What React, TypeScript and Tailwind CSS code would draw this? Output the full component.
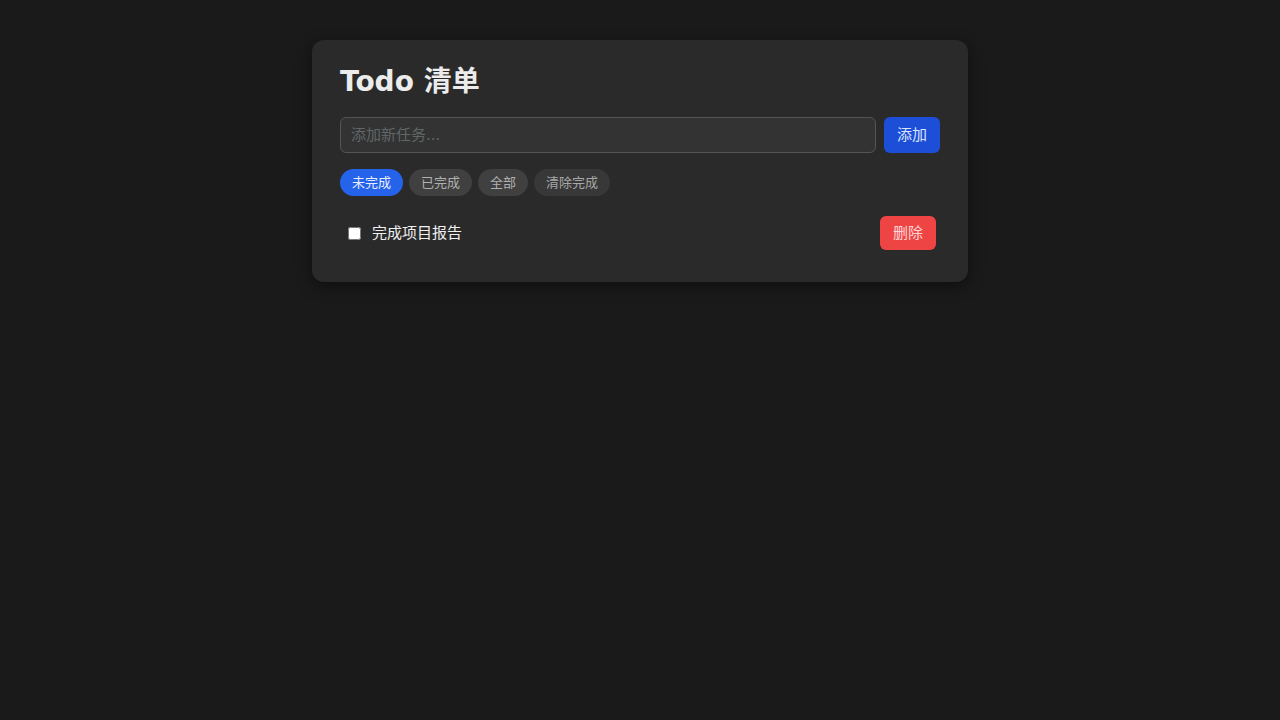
import React from "react";

const font = { fontFamily: '"DejaVu Sans", "Noto Sans CJK SC", sans-serif' };

export default function App() {
  return (
    <div className="min-h-screen w-full bg-[#1a1a1a] pt-10" style={font}>
      <div className="mx-auto w-[656px] rounded-xl bg-[#2a2a2a] px-7 pt-7 pb-7 shadow-[0_4px_16px_rgba(0,0,0,0.45)]">
        <h1 className="text-[28px] leading-[28px] font-bold text-[#ececec]">Todo 清单</h1>
        <div className="mt-[21px] flex gap-2">
          <input
            className="h-9 flex-1 rounded-md border border-[#555555] bg-[#333333] px-[10px] text-[15px] text-[#e5e5e5] outline-none placeholder:text-[#5f6666]"
            placeholder="添加新任务..."
            style={font}
          />
          <button className="h-9 w-14 rounded-md bg-[#1d4ed8] text-[15px] text-[#dbe4ff]">添加</button>
        </div>
        <div className="mt-4 flex gap-[6px]">
          <button className="h-[27px] rounded-full bg-[#2563eb] px-3 text-[13px] text-[#e8eeff]">未完成</button>
          <button className="h-[27px] rounded-full bg-[#404040] px-3 text-[13px] text-[#b0b0b0]">已完成</button>
          <button className="h-[27px] rounded-full bg-[#404040] px-3 text-[13px] text-[#b0b0b0]">全部</button>
          <button className="h-[27px] rounded-full bg-[#383838] px-3 text-[13px] text-[#a8a8a8]">清除完成</button>
        </div>
        <ul className="mt-4">
          <li className="flex items-center justify-between py-1 pl-2 pr-1">
            <label className="flex items-center gap-[11px] text-[15px] text-[#f0f0f0]">
              <input type="checkbox" className="h-[13px] w-[13px]" />
              <span>完成项目报告</span>
            </label>
            <button className="h-[34px] w-14 rounded-md bg-[#ef4444] text-[15px] text-[#ffd6d6]">删除</button>
          </li>
        </ul>
      </div>
    </div>
  );
}
